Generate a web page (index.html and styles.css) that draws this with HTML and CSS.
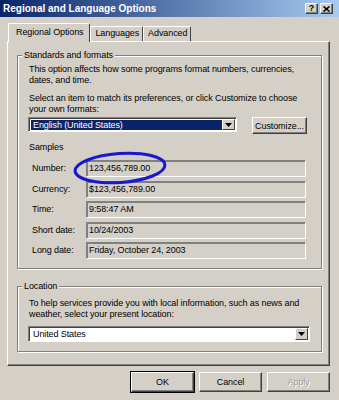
FILE: index.html
```html
<!DOCTYPE html>
<html lang="en">

<head>
    <meta charset="UTF-8">
    <meta name="viewport" content="width=device-width, initial-scale=1.0">
    <title>Regional and Language Options</title>
    <link rel="stylesheet" href="styles.css">
</head>

<body>

    <div class="dialog">
        <div class="titlebar">
            <span class="title">Regional and Language Options</span>
            <div class="caption-buttons">
                <span class="cap-btn">?</span>
                <span class="cap-btn">
                    <svg width="7" height="6" viewBox="0 0 7 6"><path d="M0.5 0.5L6.5 5.5M6.5 0.5L0.5 5.5" stroke="#000" stroke-width="1.6"/></svg>
                </span>
            </div>
        </div>

        <div class="tabs">
            <div class="tab active">Regional Options</div>
            <div class="tab">Languages</div>
            <div class="tab">Advanced</div>
        </div>

        <div class="panel">
            <div class="group standards">
                <div class="group-title">Standards and formats</div>
                <p class="intro">This option affects how some programs format numbers, currencies,<br>dates, and time.</p>
                <p class="hint">Select an item to match its preferences, or click Customize to choose<br>your own formats:</p>
                <div class="format-row">
                    <div class="combo format-combo">
                        <span class="combo-value selected">English (United States)</span>
                        <span class="combo-arrow"><svg width="7" height="4" viewBox="0 0 7 4"><path d="M0 0H7L3.5 4Z" fill="#000"/></svg></span>
                    </div>
                    <button class="btn customize">Customize...</button>
                </div>

                <div class="samples-title">Samples</div>
                <div class="samples">
                    <span class="sample-label">Number:</span>
                    <div class="field">123,456,789.00</div>
                    <span class="sample-label">Currency:</span>
                    <div class="field">$123,456,789.00</div>
                    <span class="sample-label">Time:</span>
                    <div class="field">9:58:47 AM</div>
                    <span class="sample-label">Short date:</span>
                    <div class="field">10/24/2003</div>
                    <span class="sample-label">Long date:</span>
                    <div class="field">Friday, October 24, 2003</div>

                    <!-- hand-drawn highlight round the number sample -->
                    <svg class="circle-mark" width="96" height="36" viewBox="0 0 96 36">
                        <ellipse cx="48" cy="18" rx="45" ry="14.5" fill="none" stroke="#1818cc" stroke-width="3" transform="rotate(-4 48 18)"/>
                    </svg>
                </div>
            </div>

            <div class="group location">
                <div class="group-title">Location</div>
                <p class="intro">To help services provide you with local information, such as news and<br>weather, select your present location:</p>
                <div class="combo location-combo">
                    <span class="combo-value">United States</span>
                    <span class="combo-arrow"><svg width="7" height="4" viewBox="0 0 7 4"><path d="M0 0H7L3.5 4Z" fill="#000"/></svg></span>
                </div>
            </div>
        </div>

        <div class="actions">
            <button class="btn default">OK</button>
            <button class="btn">Cancel</button>
            <button class="btn" disabled>Apply</button>
        </div>
    </div>

</body>

</html>
```

FILE: styles.css
```css
/* Classic dialog look */
* {
    box-sizing: border-box;
}

body {
    margin: 0;
    background-color: #d4d0c8;
    font-family: 'Liberation Sans', Arial, sans-serif;
    font-size: 9px;
    letter-spacing: -0.1px;
    color: #000;
}

.dialog {
    width: 339px;
    height: 400px;
}

/* Title bar */
.titlebar {
    height: 17px;
    background: linear-gradient(to right, #0a246a, #a6caf0);
    display: flex;
    align-items: center;
    justify-content: space-between;
    padding: 0 6px 0 3px;
}

.title {
    color: #fff;
    font-weight: bold;
    font-size: 10px;
    letter-spacing: 0;
}

.caption-buttons {
    display: flex;
    gap: 2px;
}

.cap-btn {
    width: 13px;
    height: 11px;
    display: flex;
    align-items: center;
    justify-content: center;
    background-color: #d4d0c8;
    border: 1px solid;
    border-color: #fff #404040 #404040 #fff;
    box-shadow: inset -1px -1px 0 #808080;
    font-weight: bold;
    font-size: 9px;
    line-height: 9px;
}

/* Tabs */
.tabs {
    display: flex;
    align-items: flex-end;
    height: 18px;
    margin-top: 6px;
    padding-left: 8px;
}

.tab {
    height: 15px;
    line-height: 13px;
    padding: 0 3px 0 4px;
    border: 1px solid;
    border-color: #fff #404040 transparent #fff;
    border-bottom: none;
    border-radius: 2px 2px 0 0;
}

.tab.active {
    height: 19px;
    line-height: 17px;
    margin-bottom: -1px;
    padding: 0 6px 0 7px;
    background-color: #d4d0c8;
}

/* Tab page */
.panel {
    margin-left: 7px;
    width: 323px;
    height: 325px;
    border: 1px solid;
    border-color: #fff #404040 #404040 #fff;
    box-shadow: inset -1px -1px 0 #808080;
    padding: 13px 7px 0 9px;
}

.group {
    border: 1px solid #808080;
    box-shadow: 1px 1px 0 #fff, inset 1px 1px 0 #fff;
    padding: 0 13px 9px 11px;
}

.group-title {
    width: fit-content;
    margin: -6px 0 0 -7px;
    padding: 0 2px;
    line-height: 11px;
    background-color: #d4d0c8;
}

p {
    margin: 0;
    line-height: 11px;
}

.standards .intro {
    margin-top: 3px;
}

.standards .hint {
    margin-top: 7px;
}

.location {
    margin-top: 17px;
}

.location .intro {
    margin-top: 6px;
}

/* Combo boxes */
.combo {
    display: flex;
    align-items: stretch;
    background-color: #fff;
    border: 1px solid;
    border-color: #808080 #fff #fff #808080;
    box-shadow: inset 1px 1px 0 #404040;
    padding: 2px 1px 1px 2px;
}

.combo-value {
    flex: 1;
    line-height: 10px;
    padding-left: 2px;
}

.combo-value.selected {
    background-color: #0a246a;
    color: #fff;
}

.combo-arrow {
    width: 13px;
    display: flex;
    align-items: center;
    justify-content: center;
    background-color: #d4d0c8;
    border: 1px solid;
    border-color: #fff #404040 #404040 #fff;
    margin-top: -1px;
}

.format-row {
    display: flex;
    align-items: flex-start;
    gap: 15px;
    margin-top: 2px;
}

.format-combo {
    width: 209px;
    height: 15px;
    margin-left: -1px;
}

.location-combo {
    height: 16px;
    margin: 6px -2px 0 -1px;
}

/* Buttons */
.btn {
    font-family: inherit;
    font-size: 9px;
    letter-spacing: -0.1px;
    color: #000;
    background-color: #d4d0c8;
    border: 1px solid;
    border-color: #fff #404040 #404040 #fff;
    box-shadow: inset -1px -1px 0 #808080;
    padding: 0;
    cursor: pointer;
}

.customize {
    width: 55px;
    height: 17px;
}

.btn.default {
    outline: 1px solid #000;
    outline-offset: 0;
}

.btn:disabled {
    color: #a09d96;
    text-shadow: 1px 1px 0 #fff;
    cursor: default;
}

/* Samples */
.samples-title {
    margin-top: 8px;
    line-height: 11px;
}

.samples {
    position: relative;
    display: grid;
    grid-template-columns: 54px 220px;
    grid-auto-rows: 17px;
    row-gap: 3.5px;
    margin: 7px 2px 0 3px;
}

.sample-label {
    line-height: 17px;
}

.field {
    border: 1px solid;
    border-color: #808080 #fff #fff #808080;
    box-shadow: inset 1px 1px 0 #808080;
    padding-left: 2px;
    line-height: 15px;
}

.circle-mark {
    position: absolute;
    left: 40px;
    top: -10px;
}

/* Bottom buttons */
.actions {
    display: flex;
    justify-content: flex-end;
    gap: 5px;
    margin-top: 6px;
    padding-right: 9px;
}

.actions .btn {
    width: 63px;
    height: 20px;
}
```
